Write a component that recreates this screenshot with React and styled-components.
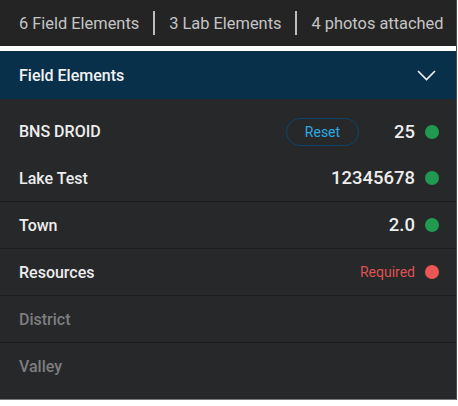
import React from "react";
import styled, { createGlobalStyle } from "styled-components";

const GlobalStyle = createGlobalStyle`
  body {
    margin: 0;
    background: #ffffff;
    font-family: Roboto, "Liberation Sans", sans-serif;
  }
`;

const Panel = styled.div`
  width: 456px;
  border-right: 1px solid #4a4b4d;
  border-bottom: 1px solid #77797c;
  background: #ffffff;
`;

const SummaryBar = styled.div`
  height: 46px;
  background: #242424;
  display: flex;
  align-items: center;
  padding: 0 0 0 19px;
  color: #c4c4c4;
  font-size: 16.4px;
  margin-bottom: 5px;
`;

const Divider = styled.span`
  width: 2px;
  height: 24px;
  background: #bdbdbd;
  margin: 0 14px 0 14px;
`;

const Header = styled.div`
  height: 48px;
  background: #08304b;
  display: flex;
  align-items: center;
  justify-content: space-between;
  padding: 0 20px 0 19px;
  color: #f2f2f2;
  font-size: 16px;
  font-weight: 500;
`;

const List = styled.div`
  background: #27282a;
  padding: 9px 0 9px;
`;

const Row = styled.div`
  height: 47px;
  display: flex;
  align-items: center;
  padding: 0 17px 0 19px;
  border-bottom: ${(p) => (p.$line ? "1px solid #1b1c1d" : "none")};
  box-sizing: border-box;
`;

const Label = styled.span`
  flex: 1;
  font-size: 16px;
  font-weight: 500;
  color: ${(p) => (p.$muted ? "#7d7e80" : "#ededed")};
`;

const Value = styled.span`
  font-size: 18.5px;
  font-weight: 500;
  color: #ededed;
`;

const Required = styled.span`
  font-size: 14px;
  color: #de5252;
`;

const Dot = styled.span`
  width: 14px;
  height: 14px;
  border-radius: 50%;
  margin-left: 10px;
  background: ${(p) => (p.$bad ? "#ea5656" : "#1f9a50")};
`;

const ResetButton = styled.button`
  width: 73px;
  height: 28px;
  border: 1px solid #0e4668;
  border-radius: 14px;
  background: transparent;
  color: #2ea8e2;
  font-family: inherit;
  font-size: 14px;
  margin-right: 35px;
  padding: 0;
`;

const Chevron = () => (
  <svg width="19" height="11" viewBox="0 0 19 11">
    <path d="M1 1 L9.5 9.5 L18 1" fill="none" stroke="#f2f2f2" strokeWidth="1.6" />
  </svg>
);

const rows = [
  { name: "BNS DROID", value: "25", reset: true },
  { name: "Lake Test", value: "12345678", line: true },
  { name: "Town", value: "2.0", line: true },
  { name: "Resources", required: true, line: true },
  { name: "District", muted: true, line: true },
  { name: "Valley", muted: true },
];

export default function App() {
  return (
    <>
      <GlobalStyle />
      <Panel>
        <SummaryBar>
          <span>6 Field Elements</span>
          <Divider />
          <span>3 Lab Elements</span>
          <Divider />
          <span>4 photos attached</span>
        </SummaryBar>
        <Header>
          <span>Field Elements</span>
          <Chevron />
        </Header>
        <List>
          {rows.map((r) => (
            <Row key={r.name} $line={r.line}>
              <Label $muted={r.muted}>{r.name}</Label>
              {r.reset && <ResetButton>Reset</ResetButton>}
              {r.value && <Value>{r.value}</Value>}
              {r.required && <Required>Required</Required>}
              {(r.value || r.required) && <Dot $bad={r.required} />}
            </Row>
          ))}
        </List>
      </Panel>
    </>
  );
}
